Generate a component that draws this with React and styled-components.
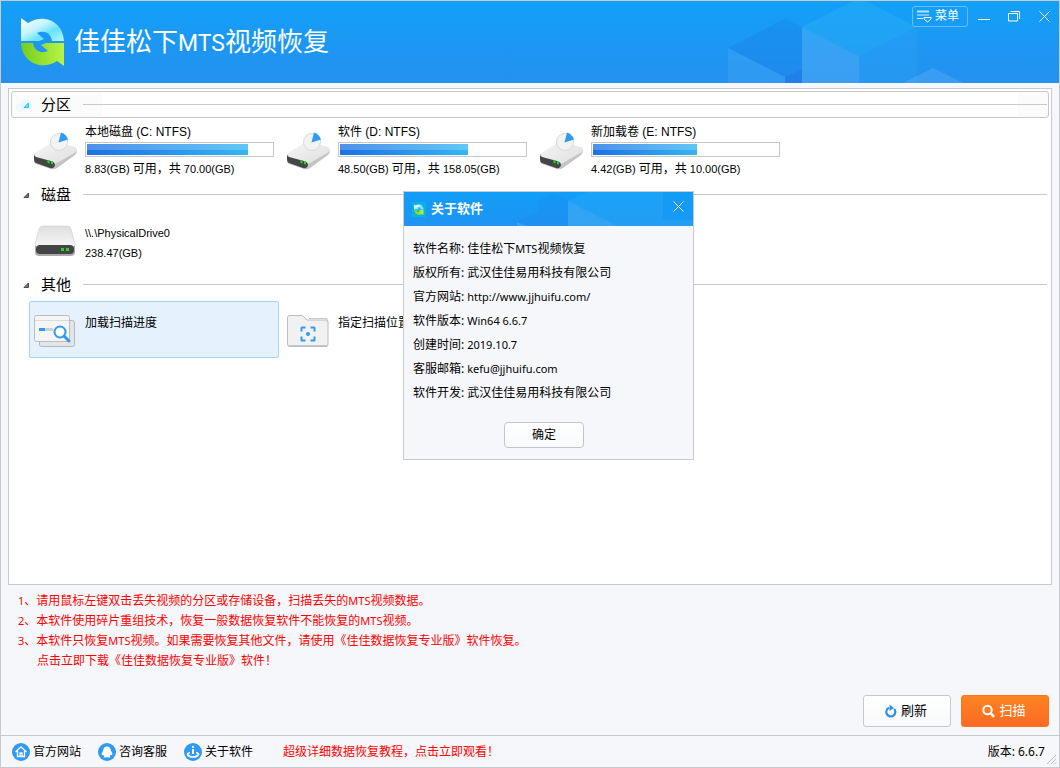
import React from "react";
import styled, { createGlobalStyle, css } from "styled-components";

const GlobalStyle = createGlobalStyle`
  *, *::before, *::after { box-sizing: border-box; }
  body {
    margin: 0;
    background: #f6f7fa;
    color: #000;
    font: 12px/20px "Liberation Sans", "Noto Sans CJK SC", sans-serif;
  }
  button { font: inherit; color: inherit; cursor: pointer; }
  h1, h2, ol, ul, dl, dd, dt, p { margin: 0; padding: 0; font-weight: normal; list-style: none; }
  a { color: inherit; text-decoration: none; }
  svg { display: block; flex: none; }
`;

const Window = styled.div`
  position: relative;
  display: flex;
  flex-direction: column;
  min-height: 100vh;
  border: 1px solid #c8cacf;
  background: #f6f7fa;
`;

const TitleBar = styled.header`
  position: relative;
  display: flex;
  align-items: center;
  height: 82px;
  padding-left: 19px;
  background: linear-gradient(#12a0f9, #2590ee);
  color: #fff;
`;

const HeaderArt = styled.svg`
  position: absolute;
  top: 0;
  right: 91px;
`;

const AppName = styled.h1`
  padding-left: 6px;
  font: 400 26px/36px "Noto Sans CJK SC", sans-serif;
  white-space: nowrap;
`;

const AppNameLatin = styled.span`
  font: 400 23px/36px Roboto, sans-serif;
`;

const WindowTools = styled.div`
  position: relative;
  align-self: flex-start;
  display: flex;
  align-items: center;
  margin-left: auto;
  padding: 4px 0;
`;

const MenuButton = styled.button`
  display: flex;
  align-items: center;
  gap: 3px;
  width: 56px;
  height: 21px;
  margin-right: 1px;
  padding: 0 4px;
  border: 1px solid #67befa;
  border-radius: 3px;
  background: transparent;
  white-space: nowrap;
`;

const IconButton = styled.button`
  display: grid;
  place-items: center;
  width: 30px;
  height: 22px;
  padding: 0;
  border: 0;
  background: transparent;
  color: #fff;
`;

const Panel = styled.main`
  flex: 1;
  margin: 5px 7px 0;
  padding: 2px;
  border: 1px solid #c8cacf;
  background: #fff;
`;

const SectionHead = styled.button`
  display: flex;
  align-items: center;
  width: 100%;
  height: 27px;
  padding: 0 1px 0 8px;
  border: 1px solid transparent;
  border-radius: 3px;
  background: #fff;
  text-align: left;
  ${(p) =>
    p.$focused &&
    css`
      border-color: #c8c8c8;
      background: linear-gradient(90deg, #fbfbfb 90px, #fff 90px, #fff calc(100% - 30px), #fbfbfb 0);
    `}
`;

const SectionName = styled.h2`
  margin: 0 12px 0 9px;
  font-size: 15px;
  line-height: 24px;
`;

const Rule = styled.span`
  flex: 1;
  height: 1px;
  background: #c8c8c8;
`;

const Items = styled.div`
  display: flex;
  gap: 3px;
  padding: 3px 0 3px 18px;
`;

const Item = styled.button`
  display: flex;
  flex: none;
  width: 250px;
  height: 57px;
  padding: 0;
  border: 1px solid ${(p) => (p.$selected ? "#a5d2f5" : "transparent")};
  border-radius: 2px;
  background: ${(p) => (p.$selected ? "#e5f2fd" : "transparent")};
  text-align: left;
`;

const ItemIcon = styled.span`
  display: flex;
  align-items: center;
  justify-content: center;
  width: 55px;
  height: 57px;
  padding-right: 5px;
`;

const ItemText = styled.span`
  display: flex;
  flex-direction: column;
  padding-top: ${(p) => (p.$lower ? 11 : 0)}px;
  white-space: nowrap;
`;

const Small = styled.span`
  font-size: 11px;
`;

const Capacity = styled.span`
  margin-top: 3px;
  font-size: 11px;
  line-height: 18px;
`;

const Han = styled.span`
  font-size: 12px;
`;

const Meter = styled.span`
  display: block;
  width: 189px;
  height: 15px;
  padding: 1px;
  border: 1px solid #c8c8c8;
`;

const MeterFill = styled.span`
  display: block;
  height: 11px;
  background:
    linear-gradient(rgba(255, 255, 255, 0.22) 50%, transparent 50%),
    linear-gradient(90deg, #1b71e5, #35b6f4);
`;

const Notes = styled.ol`
  padding: 6px 17px 0;
  color: #f00;
`;

const Note = styled.li`
  padding-left: ${(p) => (p.$indent ? 19 : 0)}px;
`;

const Latin = styled.span`
  font-family: "Noto Sans", sans-serif;
  font-size: 11px;
`;

const Actions = styled.div`
  display: flex;
  justify-content: flex-end;
  gap: 10px;
  padding: 24px 10px 8px;
`;

const ActionButton = styled.button`
  display: flex;
  align-items: center;
  justify-content: center;
  gap: 4px;
  width: 88px;
  height: 32px;
  padding: 0 2px 0 0;
  border: 1px solid ${(p) => (p.$primary ? "#fa7420" : "#c6c8cd")};
  border-radius: 3px;
  background: ${(p) =>
    p.$primary ? "linear-gradient(#fd8420, #fd6a24)" : "linear-gradient(#fff, #f8f9fb)"};
  color: ${(p) => (p.$primary ? "#fff" : "#000")};
  font-size: 13px;
`;

const StatusBar = styled.footer`
  position: relative;
  display: flex;
  align-items: center;
  height: 32px;
  padding: 0 14px 0 11px;
  border-top: 1px solid #c8cacf;
`;

const StatusLinks = styled.nav`
  display: flex;
  gap: 17px;
`;

const StatusLink = styled.a`
  display: flex;
  align-items: center;
  gap: 3px;
`;

const Tutorial = styled.a`
  margin-left: 30px;
  color: #f00;
`;

const Version = styled.p`
  margin-left: auto;
  font-family: "Noto Sans", "Noto Sans CJK SC", sans-serif;
`;

const Grip = styled.svg`
  position: absolute;
  right: 2px;
  bottom: 2px;
`;

const Dialog = styled.section`
  position: absolute;
  top: 190px;
  left: 402px;
  width: 291px;
  border: 1px solid #c8cacf;
  background: #f6f7fa;
`;

const DialogBar = styled.header`
  position: relative;
  display: flex;
  align-items: center;
  height: 34px;
  padding-left: 8px;
  background: linear-gradient(#129dfa, #1e94f1);
  color: #fff;
`;

const DialogArt = styled.svg`
  position: absolute;
  top: 0;
  right: 0;
`;

const DialogTitle = styled.h2`
  flex: 1;
  padding-left: 5px;
  font-size: 13px;
  font-weight: bold;
`;

const DialogClose = styled(IconButton)`
  position: relative;
  height: 28px;
  align-self: flex-start;
`;

const DialogBody = styled.div`
  display: flex;
  flex-direction: column;
  align-items: center;
  gap: 17px;
  padding: 11px 18px 11px 9px;
`;

const Facts = styled.dl`
  width: 100%;
  font-family: "Noto Sans", "Noto Sans CJK SC", sans-serif;
  line-height: 24px;
`;

const Fact = styled.div`
  display: flex;
  gap: 3px;
`;

const OkButton = styled.button`
  width: 80px;
  height: 26px;
  padding: 0;
  border: 1px solid #c2c4cb;
  border-radius: 4px;
  background: linear-gradient(#fff, #f8f9fb);
`;

function Logo({ width, height, small }) {
  return (
    <svg width={width} height={height} viewBox="0 0 48 52" aria-hidden="true">
      <defs>
        <linearGradient id="logoTop" x1="0" y1="0" x2="1" y2="1">
          <stop offset="0" stopColor="#fff" />
          <stop offset="0.4" stopColor="#c4f4fd" />
          <stop offset="0.65" stopColor="#66e2f8" />
          <stop offset="1" stopColor="#b4f6ff" />
        </linearGradient>
        <linearGradient id="logoLow" x1="0" y1="0" x2="1" y2="0">
          <stop offset="0" stopColor="#74cc1d" />
          <stop offset="1" stopColor="#b6f546" />
        </linearGradient>
      </defs>
      {small && <rect width="48" height="52" fill="#09b2e6" />}
      <g transform={small ? "translate(6 7) scale(0.76)" : undefined}>
        <path d="M1 2 L8 7 C23 -3 43 5 44 25 H32 C31 17 24 14 17 17 L24 23 L19 25 H1 Z" fill="url(#logoTop)" />
        <path d="M44 27 V50 L37 45 C22 55 2 47 1 27 H13 C14 35 21 38 28 35 L21 29 L26 27 Z" fill="url(#logoLow)" />
      </g>
    </svg>
  );
}

function CloseIcon({ size = 11 }) {
  return (
    <svg width={size} height={size} viewBox="0 0 11 11" stroke="#fff" aria-hidden="true">
      <path d="M.5 .5 L10.5 10.5 M10.5 .5 L.5 10.5" />
    </svg>
  );
}

function Caret({ active }) {
  return (
    <svg width="12" height="12" viewBox="0 0 12 12" aria-hidden="true">
      {active && <circle cx="6" cy="6" r="6" fill="#e9faff" />}
      <path
        d="M4 8.5 H8.5 V4 Z"
        fill={active ? "#7fdcf8" : "#777"}
        stroke={active ? "#24c0ef" : "#4a4a4a"}
      />
    </svg>
  );
}

function PartitionIcon() {
  return (
    <svg width="44" height="38" viewBox="0 0 44 38" aria-hidden="true">
      <defs>
        <linearGradient id="partTop" x1="0" y1="0" x2="1" y2="1">
          <stop offset="0" stopColor="#f6f6f6" />
          <stop offset="1" stopColor="#dedede" />
        </linearGradient>
      </defs>
      <path d="M1 24 V29 Q1 31 3 32 L18 37 Q21 38 24 36 L42 23 Q44 21 44 18 Z" fill="#c4c4c4" />
      <path d="M2 21 L18 11 Q21 9 24 10 L42 15 Q45 17 43 20 L24 31 Q21 33 18 31 L3 25 Q0 23 2 21 Z" fill="url(#partTop)" />
      <path d="M1 22 Q1 24 3 25 L18 29 Q22 30 22 33 Q21 37 17 36 L3 31 Q1 30 1 27 Z" fill="#454545" />
      <path d="M14.500 28 l2 .6 v3 l-2 -.6 z M18 29 l2 .6 v3 l-2 -.6 z" fill="#25d52d" />
      <circle cx="26" cy="10" r="8.500" fill="#f3f3f3" stroke="#dadada" />
      <path d="M25.500 10.500 L28 .5 Q33 2 35 7.500 Z" fill="#2e9af0" />
    </svg>
  );
}

function DiskIcon() {
  return (
    <svg width="42" height="32" viewBox="0 0 42 32" aria-hidden="true">
      <defs>
        <linearGradient id="diskTop" x1="0" y1="0" x2="0" y2="1">
          <stop offset="0" stopColor="#dedede" />
          <stop offset="1" stopColor="#f7f7f7" />
        </linearGradient>
      </defs>
      <path d="M1 20 H41 V27 Q41 31 37 31 H5 Q1 31 1 27 Z" fill="#aaa" />
      <path d="M5 4 Q6 1 9 1 H33 Q36 1 37 4 L41 19 Q41 22 38 22 H4 Q1 22 1 19 Z" fill="url(#diskTop)" stroke="#d0d0d0" strokeWidth=".6" />
      <rect x="2" y="20" width="38" height="9" rx="4" fill="#454545" />
      <path d="M27 23 h3 v3 h-3 z M32 23 h3 v3 h-3 z" fill="#25d52d" />
    </svg>
  );
}

function ProgressIcon() {
  return (
    <svg width="42" height="34" viewBox="0 0 42 34" fill="none" aria-hidden="true">
      <rect x="5.500" y="6.500" width="35" height="26" rx="2" fill="#e4e5e7" stroke="#b4b8bd" />
      <rect x=".5" y="1.500" width="35" height="26" rx="2" fill="#f5f5f6" stroke="#b9bcc0" />
      <path d="M1 6.500 H35" stroke="#dadbdd" />
      <path d="M5 15.500 H19" stroke="#cdd0d3" strokeWidth="3" />
      <path d="M5 15.500 H11" stroke="#2e9af0" strokeWidth="3" />
      <circle cx="26" cy="18" r="5.500" fill="#fff" stroke="#2e9af0" strokeWidth="2" />
      <path d="M30 22 L35 27" stroke="#2e9af0" strokeWidth="3" strokeLinecap="round" />
    </svg>
  );
}

function FolderIcon() {
  return (
    <svg width="42" height="34" viewBox="0 0 42 34" fill="none" aria-hidden="true">
      <path d="M2.500 1.500 H14 Q16 1.500 17 3 L20 6 H40 Q41 6 41 8 V30 Q41 32.500 39 32.500 H2.500 Q.5 32.500 .5 30 V3.500 Q.5 1.500 2.500 1.500 Z" fill="#f1f1f2" stroke="#b9bcc0" />
      <path d="M22 4.500 H40 V8 M1 31.500 H40" stroke="#c6c8cb" />
      <path d="M14.500 17.500 V14 Q14.500 13.500 15 13.500 H18.500 M23.500 13.500 H27 Q27.500 13.500 27.500 14 V17.500 M27.500 22.500 V26 Q27.500 26.500 27 26.500 H23.500 M18.500 26.500 H15 Q14.500 26.500 14.500 26 V22.500" stroke="#2e9af0" strokeWidth="2" />
      <circle cx="21" cy="20" r="2" fill="#2e9af0" />
    </svg>
  );
}

function RoundIcon({ kind }) {
  return (
    <svg width="18" height="18" viewBox="0 0 18 18" fill="none" aria-hidden="true">
      <circle cx="9" cy="9" r="9" fill="#309af0" />
      {kind === "home" && (
        <path d="M3.500 9 L9 4 L14.500 9 M5.500 8 V13.500 H12.500 V8 M8 13 V10 H10 V13" stroke="#fff" strokeWidth="1.300" />
      )}
      {kind === "chat" && (
        <path d="M9 3.500 Q12.500 3.500 12.800 7.500 Q14.800 10 14.300 12 L12.800 12 L11.800 13 L12.500 14.500 H9.800 L9 14 L8.200 14.500 H5.500 L6.200 13 L5.200 12 L3.700 12 Q3.200 10 5.200 7.500 Q5.500 3.500 9 3.500 Z" fill="#fff" />
      )}
      {kind === "about" && (
        <>
          <path d="M9 3 V4.800 M9 6 V11" stroke="#fff" strokeWidth="2" />
          <path d="M6 9.500 Q3.500 10 3.500 11.500 Q5 14 9 14 Q13 14 14.500 11.500 Q14.500 10 12 9.500" stroke="#fff" strokeWidth="1.600" />
        </>
      )}
    </svg>
  );
}

const drives = [
  { name: "本地磁盘 (C: NTFS)", free: "8.83(GB)", total: "70.00(GB)", used: 87 },
  { name: "软件 (D: NTFS)", free: "48.50(GB)", total: "158.05(GB)", used: 69 },
  { name: "新加载卷 (E: NTFS)", free: "4.42(GB)", total: "10.00(GB)", used: 56 },
];

const facts = [
  ["软件名称:", <>佳佳松下<Latin>MTS</Latin>视频恢复</>],
  ["版权所有:", "武汉佳佳易用科技有限公司"],
  ["官方网站:", <a href="http://www.jjhuifu.com/"><Latin>http://www.jjhuifu.com/</Latin></a>],
  ["软件版本:", <Latin>Win64 6.6.7</Latin>],
  ["创建时间:", <Latin>2019.10.7</Latin>],
  ["客服邮箱:", <Latin>kefu@jjhuifu.com</Latin>],
  ["软件开发:", "武汉佳佳易用科技有限公司"],
];

function Section({ title, focused, children }) {
  return (
    <section>
      <SectionHead type="button" $focused={focused} aria-expanded="true">
        <Caret active={focused} />
        <SectionName>{title}</SectionName>
        <Rule />
      </SectionHead>
      <Items>{children}</Items>
    </section>
  );
}

function AboutDialog() {
  return (
    <Dialog role="dialog" aria-labelledby="about-title">
      <DialogBar>
        <DialogArt width="176" height="34" aria-hidden="true">
          <path d="M21 9 L36 1 L51 9 V34 H12 L0 30 L21 19 Z" fill="#1a86ea" opacity=".25" />
          <path d="M0 30 L9 34 H0 Z" fill="#5db5f5" opacity=".4" />
          <path d="M51 9 L70 0 H176 V34 H51 Z" fill="#2fb2f5" opacity=".3" />
          <path d="M51 9 L100 34 H51 Z" fill="#69b5f5" opacity=".25" />
          <path d="M146 0 H176 V28 H146 Z" fill="#129af6" opacity=".75" />
        </DialogArt>
        <Logo width={14} height={15} small />
        <DialogTitle id="about-title">关于软件</DialogTitle>
        <DialogClose type="button" aria-label="关闭"><CloseIcon /></DialogClose>
      </DialogBar>
      <DialogBody>
        <Facts>
          {facts.map(([label, value]) => (
            <Fact key={label}>
              <dt>{label}</dt>
              <dd>{value}</dd>
            </Fact>
          ))}
        </Facts>
        <OkButton type="button">确定</OkButton>
      </DialogBody>
    </Dialog>
  );
}

export default function App() {
  return (
    <Window>
      <GlobalStyle />
      <TitleBar>
        <HeaderArt width="240" height="82" aria-hidden="true">
          <path d="M0 47 L57 18 L74 26 V68 L57 76 Z" fill="#1a7fe8" opacity=".35" />
          <path d="M0 47 L57 76 V82 H0 Z" fill="#49aaf5" opacity=".35" />
          <path d="M57 76 L74 68 V82 H57 Z" fill="#1f7ce8" opacity=".8" />
          <path d="M74 26 L125 0 H138 L189 26 L131 55 Z" fill="#2db4f5" opacity=".35" />
          <path d="M74 26 L131 55 V82 H74 Z" fill="#5db5f6" opacity=".4" />
          <path d="M131 55 L189 26 V82 H131 Z" fill="#2ea2f6" opacity=".35" />
          <path d="M175 82 L205 67 L236 82 Z" fill="#5db0f8" opacity=".4" />
        </HeaderArt>
        <Logo width={48} height={52} />
        <AppName>佳佳松下<AppNameLatin>MTS</AppNameLatin>视频恢复</AppName>
        <WindowTools>
          <MenuButton type="button">
            <svg width="15" height="13" viewBox="0 0 15 13" fill="none" stroke="#fff" aria-hidden="true">
              <path d="M0 1.500 H12" opacity=".7" strokeWidth="2" />
              <path d="M0 5 H12 M0 8.500 H6" opacity=".8" />
              <path d="M7 7.500 H14 V9 L10.500 12 L7 9 Z" />
            </svg>
            菜单
          </MenuButton>
          <IconButton type="button" aria-label="最小化">
            <svg width="12" height="11" stroke="#fff" aria-hidden="true"><path d="M0 8.500 H12" /></svg>
          </IconButton>
          <IconButton type="button" aria-label="还原">
            <svg width="12" height="11" fill="none" stroke="#fff" aria-hidden="true">
              <path d="M.5 2.500 H9.500 V10 H.5 Z M2.500 .5 H11.500 V8" />
            </svg>
          </IconButton>
          <IconButton type="button" aria-label="关闭"><CloseIcon /></IconButton>
        </WindowTools>
      </TitleBar>

      <Panel>
        <Section title="分区" focused>
          {drives.map((d) => (
            <Item type="button" key={d.name}>
              <ItemIcon><PartitionIcon /></ItemIcon>
              <ItemText>
                <span>{d.name}</span>
                <Meter><MeterFill style={{ width: `${d.used}%` }} /></Meter>
                <Capacity>{d.free} <Han>可用，共</Han> {d.total}</Capacity>
              </ItemText>
            </Item>
          ))}
        </Section>
        <Section title="磁盘">
          <Item type="button">
            <ItemIcon><DiskIcon /></ItemIcon>
            <ItemText $lower>
              <Small>{"\\\\.\\PhysicalDrive0"}</Small>
              <Small>238.47(GB)</Small>
            </ItemText>
          </Item>
        </Section>
        <Section title="其他">
          <Item type="button" $selected>
            <ItemIcon><ProgressIcon /></ItemIcon>
            <ItemText $lower>加载扫描进度</ItemText>
          </Item>
          <Item type="button">
            <ItemIcon><FolderIcon /></ItemIcon>
            <ItemText $lower>指定扫描位置</ItemText>
          </Item>
        </Section>
      </Panel>

      <Notes>
        <Note><Latin>1</Latin>、请用鼠标左键双击丢失视频的分区或存储设备，扫描丢失的<Latin>MTS</Latin>视频数据。</Note>
        <Note><Latin>2</Latin>、本软件使用碎片重组技术，恢复一般数据恢复软件不能恢复的<Latin>MTS</Latin>视频。</Note>
        <Note><Latin>3</Latin>、本软件只恢复<Latin>MTS</Latin>视频。如果需要恢复其他文件，请使用《佳佳数据恢复专业版》软件恢复。</Note>
        <Note $indent><a href="#download">点击立即下载《佳佳数据恢复专业版》软件！</a></Note>
      </Notes>

      <Actions>
        <ActionButton type="button">
          <svg width="12" height="14" viewBox="0 0 12 14" fill="none" aria-hidden="true">
            <path d="M9.200 5 A4.500 4.500 0 1 1 4 3.800" stroke="#2e8fe8" strokeWidth="2.200" />
            <path d="M4.500 .5 L9 4 L4.500 7 Z" fill="#2e8fe8" />
          </svg>
          刷新
        </ActionButton>
        <ActionButton type="button" $primary>
          <svg width="13" height="14" viewBox="0 0 13 14" fill="none" stroke="#fff" aria-hidden="true">
            <circle cx="5.500" cy="6" r="4.200" strokeWidth="2" />
            <path d="M8.500 9 L12 13" strokeWidth="2.600" />
          </svg>
          扫描
        </ActionButton>
      </Actions>

      <StatusBar>
        <StatusLinks>
          <StatusLink href="#home"><RoundIcon kind="home" />官方网站</StatusLink>
          <StatusLink href="#service"><RoundIcon kind="chat" />咨询客服</StatusLink>
          <StatusLink href="#about"><RoundIcon kind="about" />关于软件</StatusLink>
        </StatusLinks>
        <Tutorial href="#tutorial">超级详细数据恢复教程，点击立即观看！</Tutorial>
        <Version>版本: 6.6.7</Version>
        <Grip width="11" height="11" stroke="#b9bbc0" aria-hidden="true">
          <path d="M1 10 L10 1 M5 10 L10 5 M8.500 10 L10 8.500" />
        </Grip>
      </StatusBar>

      <AboutDialog />
    </Window>
  );
}
